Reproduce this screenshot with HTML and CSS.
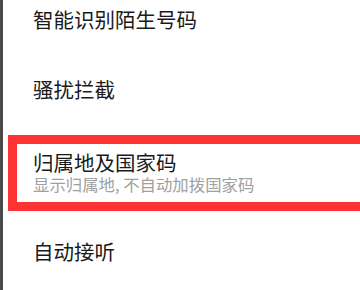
FILE: index.html
```html
<!DOCTYPE html>
<html lang="zh-CN">
<head>
<meta charset="utf-8">
<link rel="stylesheet" href="styles.css">
</head>
<body>
<div class="screen">
  <ul class="settings">
    <li class="row"><span class="title">智能识别陌生号码</span></li>
    <li class="row"><span class="title">骚扰拦截</span></li>
    <li class="row row-two highlighted">
      <span class="title">归属地及国家码</span>
      <span class="sub">显示归属地, 不自动加拨国家码</span>
      <span class="mark"></span>
    </li>
    <li class="row"><span class="title">自动接听</span></li>
  </ul>
</div>
</body>
</html>
```
FILE: styles.css
```css
html, body {
  margin: 0;
  padding: 0;
  background: #ffffff;
}
body {
  width: 360px;
  height: 290px;
  overflow: hidden;
  font-family: "Noto Sans CJK SC", "Noto Sans", sans-serif;
}
.screen {
  height: 290px;
  border-left: 3px solid #4a4a4a;
  overflow: hidden;
}
.settings {
  list-style: none;
  margin: -16px 0 0 0;
  padding: 0;
}
.row {
  position: relative;
  display: flex;
  flex-direction: column;
  justify-content: center;
  height: 70px;
  padding-left: 30px;
}
.row-two {
  height: 92px;
  padding-top: 4px;
  box-sizing: border-box;
}
.title {
  font-size: 20.5px;
  line-height: 28px;
  color: #1a1a1a;
}
.row-two .title {
  line-height: 24px;
}
.sub {
  font-size: 16.4px;
  line-height: 20px;
  color: #a0a0a0;
}
.mark {
  position: absolute;
  left: 5px;
  right: -20px;
  top: 11px;
  bottom: 5px;
  border: 9px solid #ff3333;
}
```
